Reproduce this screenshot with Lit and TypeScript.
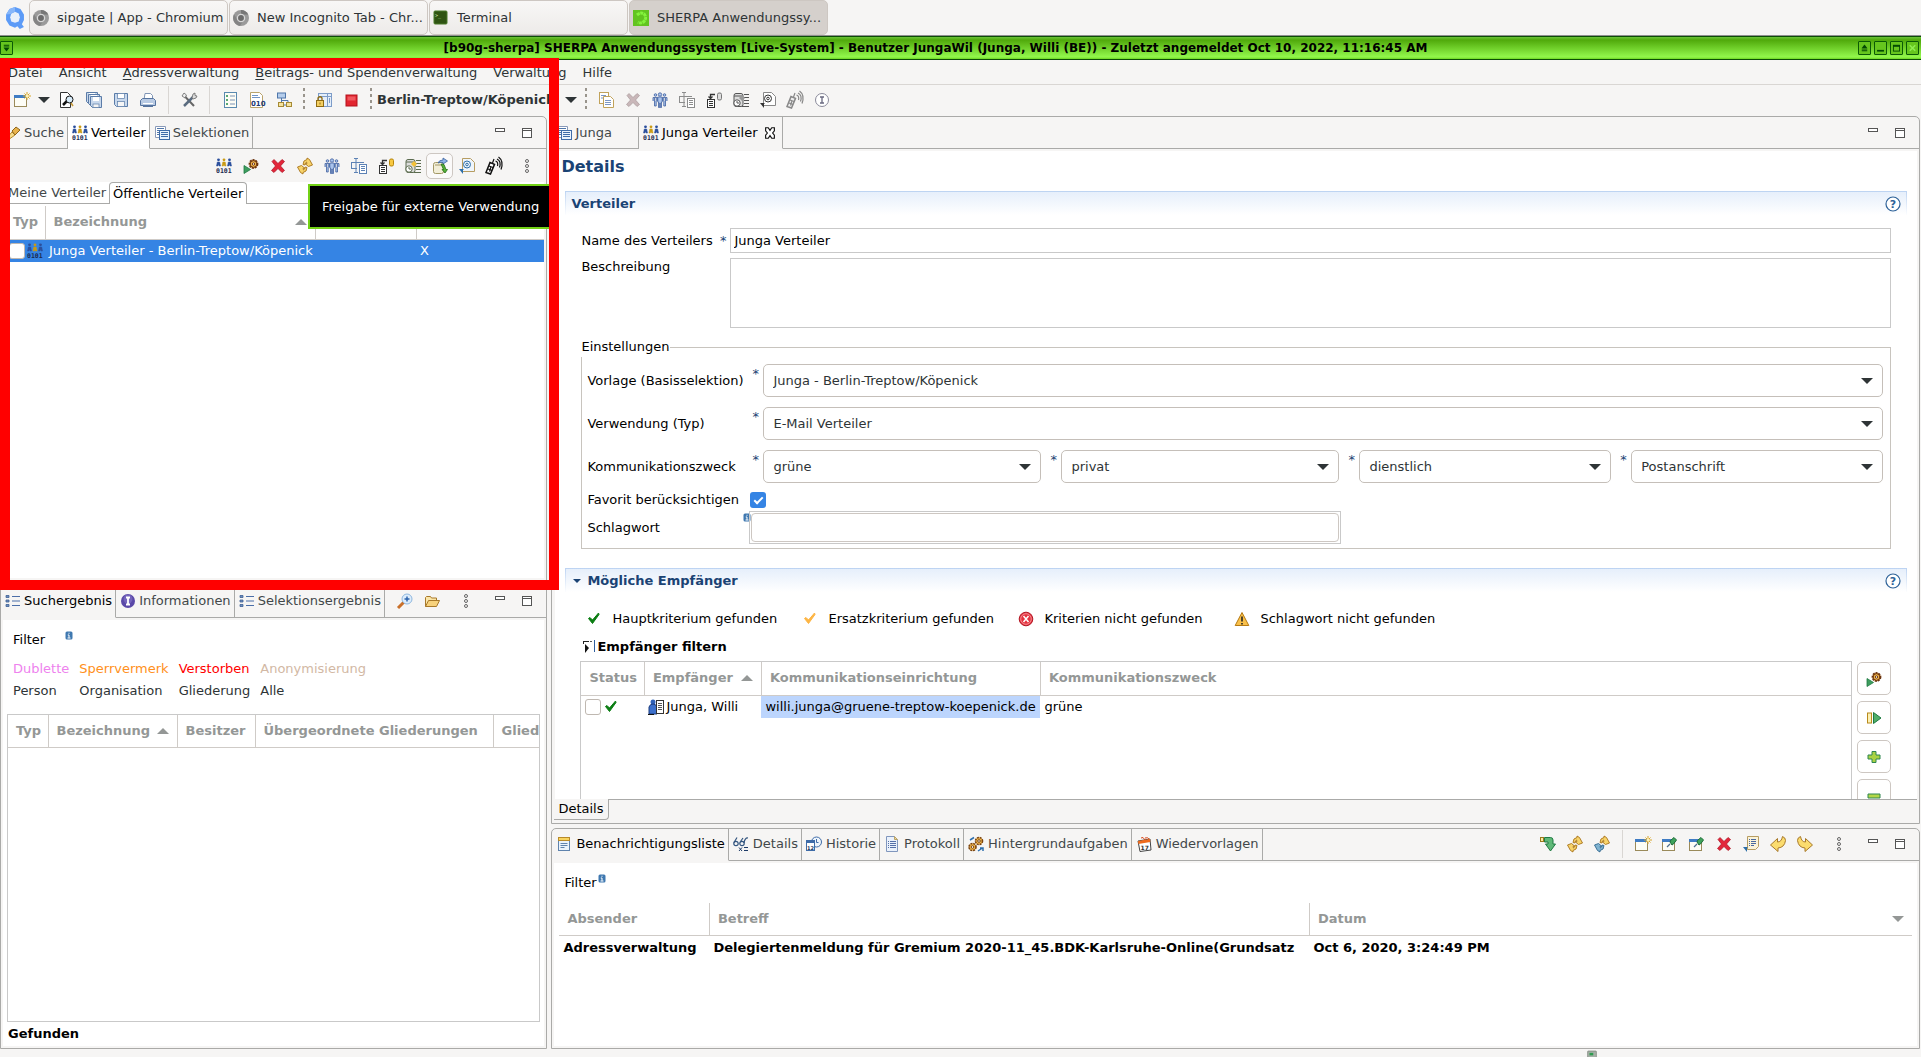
import { LitElement, html, svg, css, nothing } from "lit";
import { customElement } from "lit/decorators.js";
import { classMap } from "lit/directives/class-map.js";

/* 16x16 icon drawings, keyed by name */
const FIGURE = (x: number, c: string) => svg`
  <circle cx=${x} cy="1.800" r="1.400" fill=${c}/><path d="M${x - 2} 8L${x - 1.2} 4h2.400L${x + 2} 8h-1.400L${x} 6.500 ${x - 0.6} 8z" fill=${c} stroke=${c} stroke-width=".500"/>`;
const SHEET = (x: number, y: number, w: number, h: number, c: string) => svg`
  <rect x=${x + 0.5} y=${y + 0.5} width=${w} height=${h} fill="#fff" stroke=${c}/>
  <path d="M${x + 2} ${y + 2.5}h${w - 3}M${x + 2} ${y + 4.5}h${w - 3}M${x + 2} ${y + 6.5}h${w - 3}" stroke=${c}/>`;
const PLAY_GEAR = svg`
  <path d="M1 7.500v8l6.500-4z" fill="#3d9d5e" stroke="#1f7a42" stroke-width=".8"/>
  <circle cx="10.500" cy="6" r="4" fill="#e9a13b" stroke="#6b3410" stroke-width="1.800" stroke-dasharray="2 .9"/>
  <circle cx="10.500" cy="6" r="3.300" fill="#f2b84a" stroke="#6b3410"/><circle cx="10.500" cy="6" r="1.200" fill="#fff" stroke="#6b3410"/>`;
const WINDOW = svg`
  <rect x=".5" y="3.500" width="12" height="11" fill="#fdfdf6" stroke="#9a8a5a"/><rect x="0" y="3" width="12" height="3" fill="#3f7cc4"/>`;
const MOBILE = (c: string, f: string) => svg`
  <path d="M0 14.500l4-10 4.500 1.800-4 9.700z" fill=${f} stroke=${c} stroke-width="1.500"/><path d="M3 8l4 1.500M2 11l4 1.500M6.500 5L8 1M5 8.500l-1.500 5" stroke=${c} stroke-width="1.200"/>
  <path d="M9.500 3q3 1 2 5M11 1q4.500 2 2.500 8.500M12.500-1q5.500 4 2.500 12.500" fill="none" stroke=${c} stroke-width="1.200"/>`;
const MAILDOC = (c: string, f: string, g: string) => svg`
  <path d="M3.500.500h8l4 4v9h-12z" fill=${f} stroke=${c}/><circle cx="8" cy="6.500" r="3.500" fill="none" stroke=${g}/><circle cx="8" cy="6.500" r="1.300" fill="none" stroke=${g}/>
  <path d="M0 11h5l-1 1v4z" fill=${g}/>`;
const RENAME = (c: string) => svg`
  <path d="M0 4.500h13M0 10.500h6M.500 4v7M3 .500h4M5 .500v14M3 14.500h4" fill="none" stroke=${c}/>${SHEET(8, 6, 7, 9, c)}`;
const TREE_DB = (c: string, d: string, e: string) => svg`
  <path d="M9 2.500H4.500v4M2.500 4.500l2 2 2-2" fill="none" stroke=${c} stroke-width="1.300"/>
  <rect x="11.500" y="1" width="4" height="7" rx="1.500" fill=${d} stroke=${e}/>${SHEET(1, 7, 7, 8, c)}`;
const DB_CLOCK = (c: string, y: string) => svg`
  <rect x="1" y="1.500" width="9" height="13" rx="2" fill="#ddd" stroke=${c}/><path d="M1 4h9" stroke=${c}/>
  <circle cx="4" cy="11" r="3.200" fill="#fff" stroke=${c}/><path d="M4 9v2h2" fill="none" stroke=${c}/>
  <path d="M11 2.500h5M11 5.500h5M11 8.500h5M11 11.500h5M9 14.500h7" stroke=${c}/><path d="M6 6l3-3 3 3-3 3z" fill=${y}/>`;
/* two opposed curved arrows, upper right and lower left */
const ARROWS = (a: string, s: string, b: string, t: string) => svg`
  <path d="M6 6.500Q6 2 10 1.500V0l2.500 1.500L15.500 7l-4 1.500L8.500 6l1.500-.5-.5-1.500Q8 4.500 8 7z" fill=${a} stroke=${s} stroke-width=".9"/>
  <path d="M10 9.500Q10 14 6 14.500V16l-2.500-1.500L.500 9l4-1.500L7.500 10l-1.500.5.500 1.500Q8 11.500 8 9z" fill=${b} stroke=${t} stroke-width=".9"/>`;
const CROSS = (a: string, b: string) => svg`
  <path d="M2 3.500L4 1.500l4 4 4-4 2.500 2L10.500 8l4 4.500-2.500 2-4-4-4 4-2.500-2L5.500 8z" fill=${a} stroke=${b} stroke-width=".7"/>`;
const TICK = (c: string) => svg`<path d="M2.500 7.500l4 5L13 3.500 12.500 2 6.500 9 4 6.500z" fill=${c} stroke=${c}/>`;
const FLOPPY = (x: number, y: number) => svg`
  <path d="M${x + 0.5} ${y + 0.5}h11v11h-9l-2-2z" fill="#c8d8ec" stroke="#5b7ca8"/><rect x=${x + 3} y=${y + 1} width="6" height="4" fill="#fff"/>
  <rect x=${x + 3} y=${y + 8} width="6" height="3.500" fill="#f4f4f4" stroke="#5b7ca8" stroke-width=".7"/>`;
const LISTDOTS = svg`
  <path d="M1 2.500h3v2H1zM1 7h3v2H1zM1 11.500h3v2H1z" fill="#6d8fc0" stroke="#3f5f94" stroke-width=".8"/><path d="M7 3.500h8M7 8h8M7 12.500h8" stroke="#4b6ea8"/>`;
const COPYDOC = (c: string, l: string) => svg`
  <rect x="1.500" y=".500" width="9" height="11" fill="#fff" stroke=${c}/><path d="M5.500 4.500h7l3 3v8h-10z" fill="#fff" stroke=${c}/><path d="M7 8.500h6M7 10.500h6M7 12.500h6M3 3.500h5M3 6h2" stroke=${l}/>`;
const CHROME = svg`<circle cx="8" cy="8" r="8" fill="#9a9a9a"/><path d="M8 0a8 8 0 0 1 7.200 4.500H8z" fill="#777"/><path d="M1 4.500A8 8 0 0 0 7 16l3-5-5-1z" fill="#848484"/><circle cx="8" cy="8" r="3.600" fill="#6b6b6b" stroke="#d8d8d8" stroke-width="1.300"/>`;

const ICONS: Record<string, unknown> = {
  q: svg`<path d="M8 0l4 1.500 2.500 4v4l-1.500 3 1.500 2-3 1.500-1.800-2L8 15l-4-1.500L1.500 9.500v-4L4 1.500z" fill="#5c9bf7"/><path d="M8 3.500l2.700 1.200L11.500 7.500l-.8 3L8 11.500 5.300 10.500 4.500 7.500l.8-2.800z" fill="#e8f0fb"/><path d="M8 0L4 1.500 1.500 5.500 5 5l3-1.500z" fill="#86b6fa"/>`,
  chrome: CHROME,
  terminal: svg`<rect x="1" y="1" width="13" height="13" rx="1" fill="#2f5413" stroke="#4b7a2a"/><text x="2" y="7" font-size="5" fill="#cfe8b0" font-family="DejaVu Sans Mono">&gt;_</text>`,
  sherpa: svg`<rect width="16" height="16" fill="#62c420"/><path d="M4 5q4-3.500 7.500-.5Q14 8 11 11.500q-3 2.500-6 .5" fill="none" stroke="#84f23c" stroke-width="3" stroke-dasharray="3 .6"/>`,
  newwin: svg`${WINDOW}<path d="M13 0v8M9 4h8M10.500 1.500l5 5M15.500 1.500l-5 5" stroke="#d8a628"/><circle cx="13" cy="4" r="1.500" fill="#fff3b8"/>`,
  pinwin: svg`${WINDOW}<path d="M5 11l3-3" stroke="#4f6f8f" stroke-width="1.300"/><path d="M8 6l2 3 1.500-1 3-4-2.500-2.500L8.500 4.500z" fill="#3fa35b" stroke="#1c6b37"/>`,
  finddoc: svg`<path d="M1.500.500h7l3 3v12h-10z" fill="#fff" stroke="#333"/><path d="M4 13l4-4" stroke="#111" stroke-width="2.500"/><circle cx="10.500" cy="7.500" r="3.500" fill="#d8ecfa" stroke="#111"/><path d="M12 11l2 3" stroke="#c79a3a" stroke-width="1.500"/>`,
  saveall: svg`${FLOPPY(0, 0)}${FLOPPY(2, 2)}${FLOPPY(4, 4)}`,
  save: svg`<path d="M1.500 1.500h13v13h-11l-2-2z" fill="#c8d8ec" stroke="#5b7ca8"/><rect x="4.500" y="1.500" width="7" height="5" fill="#fff" stroke="#5b7ca8" stroke-width=".7"/><rect x="4.500" y="9.500" width="7" height="5" fill="#f6f6f6" stroke="#5b7ca8" stroke-width=".7"/>`,
  print: svg`<path d="M5 1.500h5.500l2 2V8H4z" fill="#fff" stroke="#7f95b5"/><path d="M.500 8.500l2-2h11l2 2v5H.500z" fill="#b9cbe4" stroke="#56749f"/><path d="M3 11.500h10" stroke="#fff"/><path d="M3 14.500h10" stroke="#56749f"/>`,
  tools: svg`<path d="M3.500 4L13 14" stroke="#666" stroke-width="2"/><path d="M12 5L3 14" stroke="#5b6c80" stroke-width="2.500"/><path d="M11 6l1-4 2-1v2.500l2 .5-1 2-3 1z" fill="#ddd" stroke="#666" stroke-width=".8"/><path d="M1 4l2-3 2.500 2-1.500 3z" fill="#eee" stroke="#666" stroke-width=".8"/>`,
  checklist: svg`<rect x="2.500" y=".500" width="12" height="15" fill="#fdfdf5" stroke="#5a8ab0"/><path d="M4 3h2v2H4zM4 7h2v2H4zM4 11h2v2H4z" fill="#5aa873"/><path d="M8 4h5M8 8h5M8 12h5" stroke="#7c93b5"/>`,
  doc010: svg`<path d="M1.500.500h9l3 3v12h-12z" fill="#fff" stroke="#b9a36b"/><path d="M3 3.500h6M3 5.500h8" stroke="#6f94c6"/><text x="2" y="14" font-size="7" font-weight="bold" fill="#213a78" font-family="DejaVu Sans">010</text>`,
  hier: svg`<rect x="1.500" y="1" width="8" height="5" fill="#b5cdeb" stroke="#4f76aa"/><path d="M5.500 6v7H10M5.500 8.500H12V11" fill="none" stroke="#4f76aa"/><rect x="2.500" y="10.500" width="5" height="4" fill="#f6e3a0" stroke="#a58a34"/><rect x="10.500" y="10.500" width="5" height="4" fill="#f6e3a0" stroke="#a58a34"/>`,
  lockwin: svg`<rect x="2.500" y="1.500" width="13" height="13" fill="#e4eefa" stroke="#7d9cc8"/><path d="M11.500 2v12M3 4.500h12M13.500 6v5" stroke="#7d9cc8"/><rect x=".500" y="8.500" width="7" height="6" fill="#f4cf62" stroke="#8f6b12"/><path d="M2 8V6q2-2.500 4 0v2" fill="none" stroke="#8f6b12" stroke-width="1.300"/><path d="M4 10.500v2" stroke="#8f6b12"/>`,
  stop: svg`<rect x="3" y="3" width="11" height="11" fill="#e2252f" stroke="#b3131c"/><rect x="4.500" y="4.500" width="8" height="4" fill="#f0585f"/>`,
  copy: COPYDOC("#c1a25a", "#7d97c4"),
  cross: CROSS("#e3263a", "#a80f20"),
  crossgray: CROSS("#c9b7b9", "#a89a9b"),
  people: svg`<g fill="#a9c3ec" stroke="#41619f" stroke-width=".8"><circle cx="3.500" cy="3" r="1.300"/><path d="M1 9V5.500h4.500V9M2.500 6v8h1.700V6"/><circle cx="12.500" cy="3" r="1.300"/><path d="M15 9V5.500h-4.500V9M13.500 6v8h-1.700V6"/><circle cx="8" cy="2.500" r="1.700"/><path d="M5.800 10V5h4.400v5H9.500v5.500H8.300V11h-.6v4.500H6.500V10z"/></g>`,
  rename: RENAME("#5d82b5"), renamegray: RENAME("#8c8c8c"),
  treedb: TREE_DB("#333", "#f8c840", "#b7860b"), treedbgray: TREE_DB("#333", "#ddd", "#777"),
  dbclock: DB_CLOCK("#5b6b4e", "#f3c23a"), dbclockgray: DB_CLOCK("#555", "#999"),
  mail: MAILDOC("#b79d62", "#eef5fc", "#2c6ea8"), mailgray: MAILDOC("#888", "#fff", "#333"),
  mobile: MOBILE("#111", "#fff"), mobilegray: MOBILE("#888", "#eee"),
  info: svg`<circle cx="8" cy="8" r="6.500" fill="#fff" stroke="#8a8a9a"/><path d="M6 5h4M8 5v6M6 11h4" stroke="#6a6a80" stroke-width="1.300"/>`,
  infopurple: svg`<circle cx="8" cy="8" r="7" fill="#5a48a8"/><circle cx="8" cy="6" r="4.500" fill="#8d7fd0" opacity=".5"/><path d="M6 4.500h4M8 4.500v7M6 11.500h4" stroke="#fff" stroke-width="1.800"/>`,
  torch: svg`<path d="M1 14l6-7 3 3-7 5z" fill="#f6dc8a" stroke="#b88a2a"/><path d="M7 6l4-4 4 3-5 5z" fill="#e8b24b" stroke="#8f651b"/>`,
  dist: svg`${FIGURE(2.5, "#2b4f9c")}${FIGURE(13.5, "#2b4f9c")}${FIGURE(8, "#c99a14")}<text x="0" y="15" font-size="6.500" font-weight="bold" fill="#1c2a50" font-family="DejaVu Sans Mono">0101</text>`,
  select: svg`<path d="M1.500 1.500h10v11h-10z" fill="#fff" stroke="#8a9ab8"/><path d="M3 3.500h7M3 5.500h2M3 7.500h2M3 9.500h2" stroke="#4f76aa"/><rect x="5.500" y="5.500" width="10" height="9" fill="#eaf3fd" stroke="#3f6ca8"/><path d="M7 7.500h7M7 9.500h7M7 11.500h7" stroke="#3f6ca8"/>`,
  gear: PLAY_GEAR,
  sync: ARROWS("#f7d36a", "#a8731a", "#f7d36a", "#a8731a"),
  syncblue: ARROWS("#f7d36a", "#a8731a", "#7fb2cf", "#2f678f"),
  share: svg`<rect x="1.500" y="4.500" width="10" height="11" rx="2" fill="#f2eed8" stroke="#a39866"/><path d="M3 7h7" stroke="#a39866"/><path d="M6 5q1-3 5-3V0l4.500 3L11 6V4.500Q8 4 6 5z" fill="#8fb4e6" stroke="#375f9d" stroke-width=".8"/><path d="M9 6l3 .5 2 5h1.500L13 15l-3-3.500h1.500z" fill="#55b03a" stroke="#246f17" stroke-width=".8"/>`,
  list: LISTDOTS,
  zoom: svg`<path d="M1 15l6-6" stroke="#c9702a" stroke-width="3"/><circle cx="10" cy="6" r="5" fill="#dcecfb" stroke="#8fb7de"/><path d="M7.500 6h5M10 3.500v5" stroke="#2b62ad" stroke-width="1.500"/>`,
  folder: svg`<path d="M1.500 13.500v-9l1-1h4l1 1.500h5v2" fill="#fbe6a8" stroke="#a8792a"/><path d="M1.500 13.500l3-6h11l-3 6z" fill="#f7d27c" stroke="#a8792a"/>`,
  dots: svg`<g fill="none" stroke="#666"><circle cx="8" cy="3" r="1.500"/><circle cx="8" cy="8" r="1.500"/><circle cx="8" cy="13" r="1.500"/></g>`,
  min: svg`<rect x="3.500" y="3.500" width="9" height="3" fill="#fff" stroke="#555"/>`,
  max: svg`<rect x="3.500" y="3.500" width="9" height="9" fill="#fff" stroke="#555"/><path d="M3 5.500h10" stroke="#555"/>`,
  close: svg`<path d="M3 2h3l2 3 2-3h3v3.500L11 8l2 2.500V14h-3l-2-3-2 3H3v-3.500L5 8 3 5.500z" fill="#fff" stroke="#111" stroke-width="1.300"/>`,
  help: svg`<circle cx="8" cy="8" r="7" fill="#fff" stroke="#2d6299" stroke-width="1.200"/><text x="8" y="12" text-anchor="middle" font-size="11" font-weight="bold" fill="#2d6299" font-family="DejaVu Sans">?</text>`,
  okgreen: TICK("#0a7d12"), okorange: TICK("#fdb544"),
  error: svg`<circle cx="8" cy="8" r="6.800" fill="#e5333f" stroke="#b21522"/><circle cx="8" cy="8" r="5.300" fill="none" stroke="#f6a5aa" stroke-width=".8"/><path d="M5.500 5l5 6M10.500 5l-5 6" stroke="#fff" stroke-width="1.500"/>`,
  warn: svg`<path d="M8 1.500l6.800 13H1.200z" fill="#f9c04a" stroke="#b67a12" stroke-linejoin="round"/><path d="M8 5.500v5M8 12v1.500" stroke="#222" stroke-width="1.600"/>`,
  funnel: svg`<path d="M2 2.500h6M2.500 3v2" stroke="#222"/><path d="M4 5l4 4-4 5z" fill="#111"/><path d="M13.500 1v12" stroke="#2f5f9f"/><path d="M9 2.500h2" stroke="#555"/>`,
  person: svg`<circle cx="5" cy="3" r="2.500" fill="#2f61b8"/><path d="M1 15V8q1-3 4-3t4 3v7z" fill="#3c70cc" stroke="#1b3b7d"/><rect x="8.500" y="1.500" width="7" height="13" fill="#fff" stroke="#333"/><path d="M10 4.500h4M10 6.500h4M10 8.500h4M10 10.500h4" stroke="#555"/><path d="M0 15.500h6" stroke="#111"/>`,
  resume: svg`<rect x="1.500" y="3" width="4" height="10" fill="#fbf0b4" stroke="#b88a1c"/><path d="M7.500 2.500v11L15 8z" fill="#4fae68" stroke="#1f7a42"/>`,
  plus: svg`<path d="M6 2.500h4V6h4v4h-4v3.500H6V10H2V6h4z" fill="#a9d243" stroke="#2e8650"/>`,
  minus: svg`<path d="M2 6h12v4H2z" fill="#b3d648" stroke="#2e8650"/>`,
  notelist: svg`<rect x="2.500" y="1.500" width="11" height="13" fill="#eaf3fb" stroke="#5f83ad"/><rect x="2.500" y="1.500" width="11" height="3" fill="#f8d45e" stroke="#b88a2a"/><path d="M4.500 7.500h7M4.500 9.500h7M4.500 11.500h4" stroke="#5f83ad"/>`,
  glasses: svg`<g fill="none" stroke="#33557f" stroke-width="1.200"><circle cx="3" cy="7.500" r="2.200"/><circle cx="9" cy="7.500" r="2.200"/><path d="M1 6.500L4 1.500M7.500 5.500L10 2M11 7q1-5.500 4-5"/></g><path d="M6 11.500l3 3.500M9 11.500L6 15M11 11.500h4M11 14.500h4" stroke="#1c3a66"/>`,
  history: svg`<circle cx="10.500" cy="6" r="5" fill="#eef5fc" stroke="#3f6ca8"/><path d="M10.500 3v3.500h2" fill="none" stroke="#3f6ca8"/><rect x=".500" y="4.500" width="8" height="10" fill="#fff" stroke="#3f6ca8"/><path d="M1 6h7" stroke="#3f6ca8" stroke-width="2"/><text x="1" y="13.500" font-size="5" font-weight="bold" fill="#1c3a66" font-family="DejaVu Sans">12</text>`,
  protocol: svg`<path d="M2.500.500h8l3 3v12h-11z" fill="#eaf1fb" stroke="#8096bd"/><path d="M10.500.500v3h3z" fill="#f4dc92" stroke="#b9a36b"/><path d="M4 5.500h1M6 5.500h6M4 7.500h1M6 7.500h6M4 9.500h1M6 9.500h6M4 11.500h1M6 11.500h6" stroke="#5570a8"/>`,
  gears: svg`<circle cx="11" cy="5" r="3.500" fill="#f2b84a" stroke="#7a4310" stroke-width="1.600" stroke-dasharray="2 .8"/><circle cx="11" cy="5" r="1.300" fill="#fff" stroke="#7a4310"/><circle cx="4.500" cy="11" r="3.500" fill="#f2b84a" stroke="#7a4310" stroke-width="1.600" stroke-dasharray="2 .8"/><circle cx="4.500" cy="11" r="1.300" fill="#fff" stroke="#7a4310"/><path d="M2 4l4-2.500M10 15l4.500-3M12 12h3v3" fill="none" stroke="#2e6fae" stroke-width="1.500"/>`,
  calendar: svg`<path d="M2 5l12-2 1 11-11 1.500z" fill="#fff" stroke="#444"/><path d="M2 5l12-2 .3 3L2.400 8z" fill="#ee6a1c"/><path d="M5 2q2-2 4 2M9 2q3-1 4 1" fill="none" stroke="#d8481a"/><text x="4.500" y="14" font-size="6" font-weight="bold" fill="#333" font-family="DejaVu Sans">17</text>`,
  skip: svg`<rect x=".500" y="1.500" width="3" height="4" fill="#fbe9a8" stroke="#9a7a1c"/><path d="M4.500 1.500h6q2.500 0 2.500 2.500v4h2.500l-5 7-5-7H8V6H4.500z" fill="#5fb877" stroke="#1f7a42"/>`,
  doclist: svg`<path d="M4.500.500h11v10l-3 3h-8z" fill="#fbf3d8" stroke="#b79d62"/><path d="M6 3.500h1M8 3.500h5M6 5.500h1M8 5.500h5M6 7.500h1M8 7.500h5M6 9.500h1M8 9.500h3" stroke="#4a69a0"/><path d="M0 11h5l-1 1v4z" fill="#2c6ea8"/>`,
  back: svg`<path d="M.500 9L7.500 2.500V6q4 0 5-5.500 3 1 3 4Q14.500 11.500 8 12v3.500z" fill="#fbdc6e" stroke="#a8792a"/>`,
  forward: svg`<path d="M15.500 9L8.500 2.500V6q-4 0-5-5.500-3 1-3 4Q1.500 11.500 8 12v3.500z" fill="#fbdc6e" stroke="#a8792a"/>`,
  badge: svg`<rect x="1" y="0" width="14" height="16" rx="3" fill="#3f78b0"/><path d="M8 2.500v2M5.500 7H8v5.500M5 13h6" fill="none" stroke="#fff" stroke-width="2"/>`,
  device: svg`<rect x="1" y="0" width="14" height="16" rx="1" fill="#a5afa5" stroke="#6f786f"/><rect x="4" y="3" width="6" height="4" fill="#2e9b4f"/><path d="M3 10.500h10M3 13.500h10" stroke="#e8e8e8"/>`,
  wmenu: svg`<path d="M4 4h8M4 6.500h8" stroke="#034a03" stroke-width="1.500"/><path d="M4 8h8l-4 5z" fill="#034a03"/>`,
  wshade: svg`<path d="M4 8h8L8 3z" fill="#034a03"/><path d="M4 9.500h8M4 12h8" stroke="#034a03" stroke-width="1.500"/>`,
  wmin: svg`<path d="M3 12h10" stroke="#034a03" stroke-width="2.500"/>`,
  wmax: svg`<rect x="3.500" y="4" width="9" height="8.500" fill="none" stroke="#034a03" stroke-width="1.300"/><path d="M3 5h10" stroke="#034a03" stroke-width="2.500"/>`,
  wclose: svg`<path d="M4 4l8 8M12 4l-8 8" stroke="#8fee52" stroke-width="2.200"/>`,
};

const icon = (name: string, cls = "") =>
  html`<svg class="ic ${cls}" viewBox="0 0 16 16" aria-hidden="true">${ICONS[name]}</svg>`;
const tri = (cls = "", up = false) =>
  html`<svg class="tri ${cls}" viewBox="0 0 12 6" aria-hidden="true"><path d=${up ? "M0 6h12L6 0z" : "M0 0h12L6 6z"} fill="currentColor"/></svg>`;
const tool = (name: string, label: string, cls = "") =>
  html`<button class="tool ${cls}" type="button" aria-label=${label}>${icon(name)}</button>`;

interface Tab { icon: string; text: string; active?: boolean; close?: boolean; spare?: boolean }
const tabs = (items: Tab[], extra: unknown = nothing) => html`
  <div class="tabrow">
    ${items.map((t) => html`<button type="button" class=${classMap({ tab: true, active: !!t.active, spare: !!t.spare })}>
      ${icon(t.icon)}<span>${t.text}</span>${t.close ? icon("close", "closer") : nothing}</button>`)}
    <div class="tabfill">${extra}${tool("min", "Minimieren")}${tool("max", "Maximieren")}</div>
  </div>`;

const drop = (id: string, value: string, label = "") => html`
  <span class="star">*</span>
  <span class="drop"><select id=${id} aria-label=${label || nothing}><option>${value}</option></select>${tri()}</span>`;

@customElement("app-root")
export class AppRoot extends LitElement {
  static styles = css`
    :host { display: flex; flex-direction: column; position: relative; height: 100vh; background: #f6f5f4; color: #000;
      font: 13px/20px "DejaVu Sans", sans-serif; overflow: hidden; }
    *, *::before, *::after { box-sizing: border-box; }
    button, input, select, textarea { font: inherit; color: inherit; margin: 0; }
    button { background: none; border: 0; padding: 0; }
    h1, h2, p { margin: 0; }
    .ic { width: 16px; height: 16px; flex: none; display: block; overflow: visible; }
    .tri { width: 12px; height: 6px; flex: none; color: #2e3436; }
    .taskbar { display: flex; gap: 1px; height: 36px; padding-left: 4px; border-bottom: 1px solid #8f8f8f; color: #2e3436; }
    .launcher { width: 22px; display: grid; place-items: center; margin-right: 2px; }
    .launcher .ic { width: 22px; height: 24px; }
    .task { width: 199px; height: 35px; display: flex; align-items: center; gap: 8px; padding: 0 0 0 3px; border: 1px solid #cdc7c2; border-radius: 5px;
      background: linear-gradient(#f8f7f6, #edebe9); text-align: left; }
    .task.current { background: #d5d0cc; }
    .task span { white-space: nowrap; }
    .titlebar { display: flex; align-items: center; gap: 3px; height: 24px; padding: 0 2px 0 0; border: solid #0b4d05; border-width: 1px 0;
      background: linear-gradient(#6bc238 0, #50a90b 3px, #92f84c 20px, #6cd422 100%); }
    .titlebar h1 { flex: 1; font-size: 12px; font-weight: bold; text-align: center; white-space: nowrap; }
    .winbtn { width: 13px; height: 14px; border: 1px solid #0b5a05; border-radius: 1px; background: #66c61e; display: grid; place-items: center; }
    .winbtn .ic { width: 11px; height: 12px; }
    .menubar { display: flex; gap: 16px; height: 25px; padding: 3px 8px; border-bottom: 1px solid #d9d6d3; color: #2e3436; }
    .menubar u { text-underline-offset: 2px; }
    .toolbar { display: flex; align-items: center; height: 31px; padding: 0 0 2px 8px; }
    .tool { width: 27px; height: 27px; display: grid; place-items: center; flex: none; }
    .tool.menu { width: 41px; }
    .tool.boxed { height: 26px; border: 1px solid #cdc7c2; border-radius: 5px; background: #fbfafa; }
    .narrow { width: 18px; display: grid; place-items: center; }
    .sep { width: 1px; height: 28px; margin: 0 6px 0 7px; background: #d9d6d3; flex: none; }
    .grip { width: 2px; height: 24px; margin: 0 5px 0 6px; flex: none; background: repeating-linear-gradient(#99948c 0 3px, transparent 3px 6px); }
    .scope { width: 202px; display: flex; align-items: center; justify-content: space-between; padding: 0 2px 0 0; font-weight: bold; color: #2e3436; }
    .work { flex: 1; min-height: 0; display: grid; grid-template-columns: minmax(0, 2fr) minmax(0, 5fr); gap: 4px; padding: 0 1px 8px 0; }
    .col { display: grid; gap: 4px; min-height: 0; }
    .left { grid-template-rows: minmax(0, 1fr) minmax(0, 1fr); }
    .right { grid-template-rows: minmax(0, 16fr) minmax(0, 5fr); }
    .pane { display: flex; flex-direction: column; min-height: 0; border: 1px solid #aaaaa8; border-radius: 5px 5px 0 0; }
    .tabrow { display: flex; height: 32px; flex: none; color: #42484a; }
    .tab { display: flex; align-items: center; gap: 3px; padding: 0 3px 0 4px; border: solid #aaaaa8; border-width: 0 1px 1px 0; white-space: nowrap; }
    .tab.active { border-bottom-color: transparent; color: #000; }
    .tab.spare { padding-right: 26px; }
    .white .tab.active { background: #fff; }
    .wide .tab { gap: 4px; }
    .closer { width: 14px; height: 14px; margin: 0 2px; }
    .tabfill { flex: 1; display: flex; justify-content: flex-end; align-items: center; padding-right: 6px; border-bottom: 1px solid #aaaaa8; }
    .body { flex: 1; min-height: 0; margin: 2px; background: #fff; display: flex; flex-direction: column; }
    .white .body { margin-left: 4px; }
    .viewbar { display: flex; justify-content: flex-end; align-items: center; height: 31px; padding-bottom: 2px; background: #f6f5f4; flex: none; }
    .viewbar .menu { width: 35px; margin-left: 2px; }
    .subtabs { display: flex; height: 22px; flex: none; }
    .subtab { padding: 0 3px; border-bottom: 1px solid #aaaaa8; color: #42484a; white-space: nowrap; }
    .subtab.active { border: 1px solid #aaaaa8; border-bottom: 0; border-radius: 4px 4px 0 0; color: #000; }
    .subfill { flex: 1; border-bottom: 1px solid #aaaaa8; }
    table { border-collapse: collapse; table-layout: fixed; width: 100%; }
    th { height: 33px; padding: 0 8px; border: solid #cfcbc7; border-width: 0 1px 1px 0; color: #949796; text-align: left; font-weight: bold; white-space: nowrap; overflow: hidden; }
    th:last-child { border-right: 0; }
    td { height: 23px; padding: 0 4px; white-space: nowrap; overflow: hidden; }
    th .tri { color: #949796; margin-left: 3px; }
    .thflex { display: flex; align-items: center; justify-content: space-between; }
    .cellflex { display: flex; align-items: center; gap: 2px; }
    .dist-table { margin-top: 2px; }
    .selected { background: #3584e4; color: #fff; }
    .box { appearance: none; width: 16px; height: 16px; flex: none; border: 1px solid #bfb8b1; border-radius: 3px; background: #fff; display: block; }
    .w40 { width: 40px; } .w63 { width: 63px; } .w78 { width: 78px; } .w101 { width: 101px; } .w117 { width: 117px; } .w129 { width: 129px; }
    .w150 { width: 150px; } .w238 { width: 238px; } .w270 { width: 270px; } .w279 { width: 279px; } .w600 { width: 600px; }
    .results { padding: 10px 4px 2px; }
    .filter { display: flex; gap: 20px; padding: 0 6px; }
    .filter.tight { gap: 1px; padding: 0 5px; }
    .badge { width: 8px; height: 9px; margin-top: 1px; }
    .legend { display: grid; grid-template-columns: repeat(4, max-content); gap: 0 10px; line-height: 22px; padding: 0 6px; margin: 8px 0 12px; color: #2e3436; }
    .dub { color: #ee82ee; } .sperr { color: #ff9020; } .verst { color: #f00; } .anon { color: #d2b8a4; }
    .framed { flex: 1; min-height: 0; border: 1px solid #c9c9c9; overflow: hidden; }
    .found { font-weight: bold; margin-top: 2px; padding-left: 1px; }
    .heading { font-size: 16px; line-height: 22px; color: #1a4374; font-weight: bold; padding: 5px 6px 13px; }
    .form { overflow: hidden; display: block; }
    .sect { margin: 0 10px 13px; height: 24px; display: flex; align-items: center; gap: 4px; padding: 0 5px; border: 1px solid #bcd3f2; border-bottom: 0; border-image: linear-gradient(#bcd3f2, #fff) 1;
      background: linear-gradient(#e6effb, #fff); color: #1a4374; }
    .sect h2 { flex: 1; font-size: 13px; font-weight: bold; }
    .sect .tri { width: 8px; height: 4px; color: #1a4374; margin: 0 2px; }
    .sect .tool { width: 16px; }
    .inset { margin: 0 26px; }
    .line { display: grid; grid-template-columns: 149px minmax(0, 1fr); margin-bottom: 5px; }
    .line label { display: flex; justify-content: space-between; padding-right: 4px; line-height: 25px; }
    .line .top { line-height: 18px; }
    .text { width: 100%; height: 25px; border: 1px solid #c9c9c9; background: #fff; padding: 0 3px; border-radius: 0; outline: 0; display: block; }
    .area { height: 70px; resize: none; }
    .star { color: #1a4374; line-height: 20px; }
    .line .star { line-height: 25px; }
    fieldset { margin: 9px 0 0; padding: 7px 7px 4px 5px; border: 1px solid #c8c4be; min-width: 0; }
    legend { padding: 0; margin-left: -6px; }
    .setting { display: grid; grid-template-columns: 165px minmax(0, 1fr); align-items: center; margin-bottom: 10px; }
    .setting.fav { margin: -3px 0 5px; grid-template-columns: 163px auto 1fr; height: 16px; }
    .setting.tag { grid-template-columns: 156px 6px minmax(0, 592px); margin: 0; }
    .one { display: grid; grid-template-columns: 11px minmax(0, 1fr); }
    .four { display: grid; grid-template-columns: 11fr 11fr 10fr 10fr; gap: 9px; }
    .drop { display: grid; align-items: center; }
    .drop select { grid-area: 1 / 1; width: 100%; height: 33px; appearance: none; border: 1px solid #c5bfb9; border-radius: 5px; background: #fff; color: #2e3436; padding: 0 10px 0 9px; outline: 0; }
    .drop .tri { grid-area: 1 / 1; justify-self: end; margin-right: 10px; pointer-events: none; }
    .tagwrap { border: 1px solid #c9c9c9; padding: 1px; height: 33px; }
    .tagwrap .text { height: 29px; border-radius: 4px; border-color: #cdc7c2; }
    .tag .badge { align-self: start; margin-top: 2px; }
    .check { appearance: none; width: 16px; height: 16px; border-radius: 3px; background: #3584e4; display: grid; place-items: center; }
    .check::after { content: ""; width: 9px; height: 5px; border: solid #fff; border-width: 0 0 2px 2px; rotate: -45deg; translate: 0 -1px; }
    .second { margin-top: 19px; margin-bottom: 17px; }
    .keys { display: grid; grid-template-columns: repeat(4, 216px); padding-left: 5px; margin-bottom: 8px; }
    .keys span { display: flex; align-items: center; gap: 10px; }
    .subhead { display: flex; align-items: center; font-weight: bold; margin-bottom: 4px; }
    .recips { display: flex; gap: 5px; margin-left: -1px; }
    .grid { flex: 1; min-width: 0; height: 160px; border: 1px solid #c9c9c9; }
    .side { display: flex; flex-direction: column; gap: 6px; padding-top: 1px; }
    .side button { width: 34px; height: 33px; border: 1px solid #cdc7c2; border-radius: 5px; background: #fff; display: grid; place-items: center; }
    .hit { background: #bcd5fd; }
    .pagetabs { display: flex; height: 24px; flex: none; margin: 0 2px; border-top: 1px solid #aaaaa8; }
    .page { height: 21px; margin-top: -1px; padding: 0 4px; border: solid #aaaaa8; border-width: 0 1px 1px 0; border-radius: 0 0 4px 0; background: #f6f5f4; }
    .editor .body { margin: 2px 2px 0 3px; }
    .notes { padding: 10px 5px 0; }
    .notes table { margin-top: 10px; }
    .notes td { font-weight: bold; }
    .tray { position: absolute; left: 82.600%; bottom: -6px; }
    .tray .ic { width: 10px; height: 14px; }
    .tip { position: absolute; left: 308px; top: 184px; padding: 11px 12px; width: 244px; height: 45px; border: 2px solid #73d216; background: #000; color: #fff; line-height: 20px; white-space: nowrap; }
    .frame { position: absolute; left: 0; top: 58px; width: calc(200% / 7 + 10px); height: calc(50vh + 3px); border: 10px solid #f00; pointer-events: none; }
  `;

  render() {
    return html`
      <nav class="taskbar">
        <button class="launcher" type="button" aria-label="Startmenü">${icon("q")}</button>
        <button class="task" type="button">${icon("chrome")}<span>sipgate | App - Chromium</span></button>
        <button class="task" type="button">${icon("chrome")}<span>New Incognito Tab - Chr...</span></button>
        <button class="task" type="button">${icon("terminal")}<span>Terminal</span></button>
        <button class="task current" type="button">${icon("sherpa")}<span>SHERPA Anwendungssy...</span></button>
      </nav>
      <header class="titlebar">
        <button class="winbtn" type="button" aria-label="Fenstermenü">${icon("wmenu")}</button>
        <h1>[b90g-sherpa] SHERPA Anwendungssystem [Live-System] - Benutzer JungaWil (Junga, Willi (BE)) - Zuletzt angemeldet Oct 10, 2022, 11:16:45 AM</h1>
        ${[["wshade", "Einrollen"], ["wmin", "Minimieren"], ["wmax", "Maximieren"], ["wclose", "Schließen"]].map(
          ([i, l]) => html`<button class="winbtn" type="button" aria-label=${l}>${icon(i)}</button>`)}
      </header>
      <nav class="menubar">
        <button type="button">Datei</button><button type="button">Ansicht</button><button type="button"><u>A</u>dressverwaltung</button>
        <button type="button"><u>B</u>eitrags- und Spendenverwaltung</button><button type="button">Verwaltung</button><button type="button">Hilfe</button>
      </nav>
      <div class="toolbar">
        ${tool("newwin", "Neu")}<button class="narrow" type="button" aria-label="Neu auswählen">${tri()}</button>
        ${tool("finddoc", "Suchen")}${tool("saveall", "Alles speichern")}${tool("save", "Speichern")}${tool("print", "Drucken")}
        <span class="sep"></span>${tool("tools", "Werkzeuge")}<span class="sep"></span>
        ${tool("checklist", "Aufgaben")}${tool("doc010", "Daten")}${tool("hier", "Gliederung")}
        <span class="grip"></span>${tool("lockwin", "Sperren")}${tool("stop", "Beenden")}<span class="grip"></span>
        <button class="scope" type="button"><span>Berlin-Treptow/Köpenick</span>${tri()}</button>
        <span class="grip"></span>
        ${tool("copy", "Kopieren")}${tool("crossgray", "Löschen")}${tool("people", "Personen")}${tool("renamegray", "Umbenennen")}${tool("treedbgray", "Export")}
        ${tool("dbclockgray", "Verlauf")}${tool("mailgray", "E-Mail")}${tool("mobilegray", "Mobil")}${tool("info", "Info")}
      </div>
      <main class="work">
        <div class="col left">
          <section class="pane white">
            ${tabs([{ icon: "torch", text: "Suche" }, { icon: "dist", text: "Verteiler", active: true }, { icon: "select", text: "Selektionen" }])}
            <div class="body">
              <div class="viewbar">
                ${tool("dist", "Verteiler")}${tool("gear", "Ausführen")}${tool("cross", "Löschen")}${tool("sync", "Aktualisieren")}${tool("people", "Personen")}
                ${tool("rename", "Umbenennen")}${tool("treedb", "Export")}${tool("dbclock", "Verlauf")}${tool("share", "Freigabe", "boxed")}${tool("mail", "E-Mail")}
                ${tool("mobile", "Mobil")}${tool("dots", "Menü", "menu")}
              </div>
              <div class="subtabs">
                <button class="subtab" type="button">Meine Verteiler</button><button class="subtab active" type="button">Öffentliche Verteiler</button><span class="subfill"></span>
              </div>
              <table class="dist-table">
                <colgroup><col class="w40"><col class="w270"><col class="w101"><col></colgroup>
                <thead><tr><th>Typ</th><th><span class="thflex">Bezeichnung ${tri("", true)}</span></th><th></th><th></th></tr></thead>
                <tbody><tr class="selected">
                  <td><span class="cellflex"><input class="box" type="checkbox" aria-label="Junga Verteiler auswählen">${icon("dist")}</span></td>
                  <td>Junga Verteiler - Berlin-Treptow/Köpenick</td><td></td><td>X</td></tr></tbody>
              </table>
            </div>
          </section>
          <section class="pane">
            ${tabs([{ icon: "list", text: "Suchergebnis", active: true }, { icon: "infopurple", text: "Informationen" }, { icon: "list", text: "Selektionsergebnis" }],
              html`${tool("zoom", "Suche verfeinern")}${tool("folder", "Öffnen")}${tool("dots", "Menü", "menu")}`)}
            <div class="body results">
              <div class="filter"><span>Filter</span>${icon("badge", "badge")}</div>
              <div class="legend">
                <span class="dub">Dublette</span><span class="sperr">Sperrvermerk</span><span class="verst">Verstorben</span><span class="anon">Anonymisierung</span>
                <span>Person</span><span>Organisation</span><span>Gliederung</span><span>Alle</span>
              </div>
              <div class="framed"><table>
                <colgroup><col class="w40"><col class="w129"><col class="w78"><col class="w238"><col></colgroup>
                <thead><tr><th>Typ</th><th><span class="thflex">Bezeichnung ${tri("", true)}</span></th><th>Besitzer</th><th>Übergeordnete Gliederungen</th><th>Glied</th></tr></thead>
              </table></div>
              <p class="found">Gefunden</p>
            </div>
          </section>
        </div>
        <div class="col right">
          <section class="pane editor">
            ${tabs([{ icon: "select", text: "Junga", spare: true }, { icon: "dist", text: "Junga Verteiler", active: true, close: true }])}
            <div class="body form">
              <h2 class="heading">Details</h2>
              <div class="sect"><h2>Verteiler</h2>${tool("help", "Hilfe")}</div>
              <div class="inset">
                <div class="line"><label for="name"><span>Name des Verteilers</span><span class="star">*</span></label><input class="text" id="name" value="Junga Verteiler"></div>
                <div class="line"><label class="top" for="desc">Beschreibung</label><textarea class="text area" id="desc"></textarea></div>
                <fieldset>
                  <legend>Einstellungen</legend>
                  <div class="setting"><label for="tpl">Vorlage (Basisselektion)</label><div class="one">${drop("tpl", "Junga - Berlin-Treptow/Köpenick")}</div></div>
                  <div class="setting"><label for="use">Verwendung (Typ)</label><div class="one">${drop("use", "E-Mail Verteiler")}</div></div>
                  <div class="setting"><label for="k0">Kommunikationszweck</label><div class="four">
                    ${["grüne", "privat", "dienstlich", "Postanschrift"].map((v, i) => html`<div class="one">${drop("k" + i, v, "Kommunikationszweck " + (i + 1))}</div>`)}
                  </div></div>
                  <div class="setting fav"><label for="fav">Favorit berücksichtigen</label><input class="check" id="fav" type="checkbox" checked></div>
                  <div class="setting tag"><label for="tag">Schlagwort</label>${icon("badge", "badge")}<div class="tagwrap"><input class="text" id="tag"></div></div>
                </fieldset>
              </div>
              <div class="sect second">${tri()}<h2>Mögliche Empfänger</h2>${tool("help", "Hilfe")}</div>
              <div class="inset">
                <div class="keys">
                  <span>${icon("okgreen")}Hauptkriterium gefunden</span><span>${icon("okorange")}Ersatzkriterium gefunden</span>
                  <span>${icon("error")}Kriterien nicht gefunden</span><span>${icon("warn")}Schlagwort nicht gefunden</span>
                </div>
                <div class="subhead">${icon("funnel")}Empfänger filtern</div>
                <div class="recips">
                  <div class="grid"><table>
                    <colgroup><col class="w63"><col class="w117"><col class="w279"><col></colgroup>
                    <thead><tr><th>Status</th><th><span class="thflex">Empfänger ${tri("", true)}</span></th><th>Kommunikationseinrichtung</th><th>Kommunikationszweck</th></tr></thead>
                    <tbody><tr>
                      <td><span class="cellflex"><input class="box" type="checkbox" aria-label="Junga, Willi auswählen">${icon("okgreen")}</span></td>
                      <td><span class="cellflex">${icon("person")}Junga, Willi</span></td><td class="hit">willi.junga@gruene-treptow-koepenick.de</td><td>grüne</td></tr></tbody>
                  </table></div>
                  <div class="side">
                    ${[["gear", "Ausführen"], ["resume", "Fortsetzen"], ["plus", "Hinzufügen"], ["minus", "Entfernen"]].map(
                      ([i, l]) => html`<button type="button" aria-label=${l}>${icon(i)}</button>`)}
                  </div>
                </div>
              </div>
            </div>
            <div class="pagetabs"><button class="page" type="button">Details</button></div>
          </section>
          <section class="pane wide">
            ${tabs([{ icon: "notelist", text: "Benachrichtigungsliste", active: true }, { icon: "glasses", text: "Details" }, { icon: "history", text: "Historie" },
              { icon: "protocol", text: "Protokoll" }, { icon: "gears", text: "Hintergrundaufgaben" }, { icon: "calendar", text: "Wiedervorlagen" }],
              html`${tool("skip", "Überspringen")}${tool("sync", "Aktualisieren")}${tool("syncblue", "Abgleichen")}<span class="sep"></span>
                ${tool("newwin", "Neu")}${tool("pinwin", "Anheften")}${tool("pinwin", "Lösen")}${tool("cross", "Löschen")}${tool("doclist", "Liste")}
                ${tool("back", "Zurück")}${tool("forward", "Vor")}${tool("dots", "Menü", "menu")}`)}
            <div class="body notes">
              <div class="filter tight"><span>Filter</span>${icon("badge", "badge")}</div>
              <table>
                <colgroup><col class="w150"><col class="w600"><col></colgroup>
                <thead><tr><th>Absender</th><th>Betreff</th><th><span class="thflex">Datum ${tri()}</span></th></tr></thead>
                <tbody><tr><td>Adressverwaltung</td><td>Delegiertenmeldung für Gremium 2020-11_45.BDK-Karlsruhe-Online(Grundsatz</td><td>Oct 6, 2020, 3:24:49 PM</td></tr></tbody>
              </table>
            </div>
          </section>
        </div>
      </main>
      <div class="tray">${icon("device")}</div>
      <div class="tip" role="tooltip">Freigabe für externe Verwendung</div>
      <div class="frame"></div>
    `;
  }
}
